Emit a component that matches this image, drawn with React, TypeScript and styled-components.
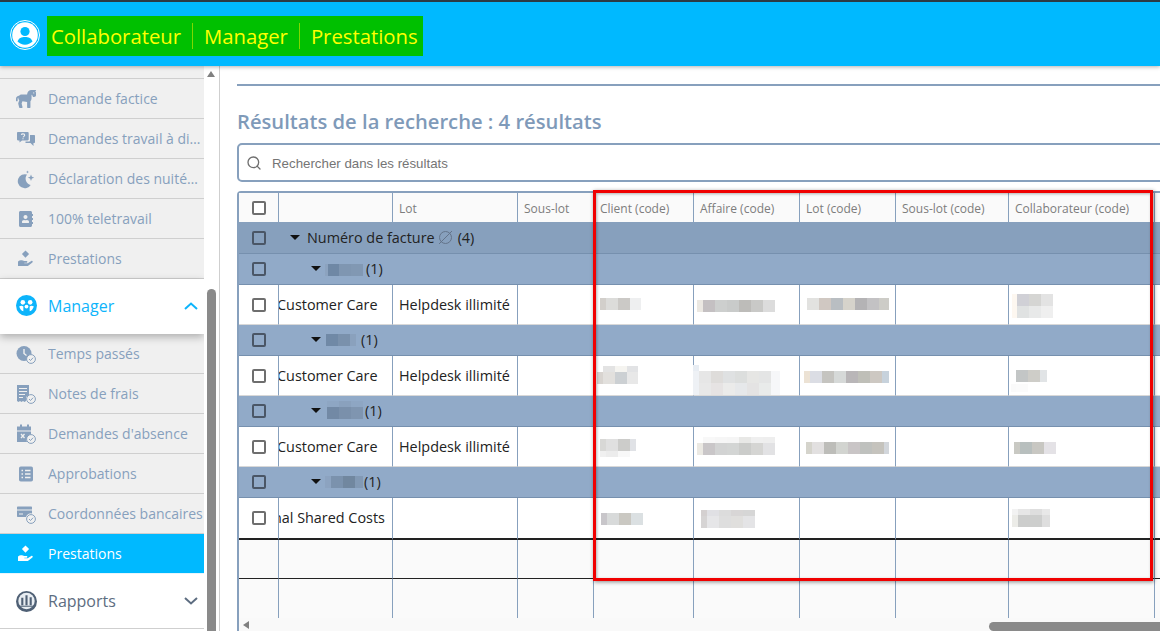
import React from "react";
import styled, { createGlobalStyle } from "styled-components";
import { FaHorse, FaAddressBook } from "react-icons/fa";
import { Search as SearchIcon } from "lucide-react";

const Global = createGlobalStyle`
  html, body { margin: 0; padding: 0; background: #fff; overflow: hidden; }
  body { font-family: "Open Sans", "Liberation Sans", sans-serif; }
  * { box-sizing: border-box; }
`;

const Page = styled.div`
  position: relative;
  width: 1160px;
  height: 631px;
  overflow: hidden;
  display: flex;
  flex-direction: column;
`;

const TopBar = styled.header`
  position: relative;
  z-index: 2;
  flex: none;
  height: 66px;
  background: #00b9ff;
  border-top: 2px solid #2b3a45;
  box-shadow: 0 1px 4px rgba(0, 0, 0, 0.3);
  display: flex;
  align-items: flex-start;
  padding: 14px 0 0 10px;
`;

const Avatar = styled.svg`
  width: 30px;
  height: 30px;
  margin: 4px 7px 0 0;
  flex: none;
`;

const Crumbs = styled.nav`
  height: 40px;
  width: 376px;
  background: #00c000;
  display: flex;
  align-items: center;
  padding-left: 4px;
  color: #ffff00;
  font-size: 20.3px;
  line-height: 27px;
`;

const Crumb = styled.span<{ $sep?: boolean }>`
  display: flex;
  align-items: center;
  height: 26px;
  padding: 0 11px;
  ${(p) => (p.$sep ? "border-left: 1px solid #7fd800;" : "padding-left: 0;")}
`;

const Body = styled.div`
  flex: 1;
  min-height: 0;
  display: flex;
`;

const Side = styled.aside`
  flex: none;
  width: 204px;
  background: #f0f0f0;
  display: flex;
  flex-direction: column;
  overflow: hidden;
`;

const SideRow = styled.div<{ $active?: boolean; $clip?: boolean }>`
  flex: none;
  height: ${(p) => (p.$clip ? "13px" : "40px")};
  display: flex;
  align-items: center;
  padding-left: 16px;
  gap: 12px;
  font-size: 14px;
  white-space: nowrap;
  color: ${(p) => (p.$active ? "#fff" : "#87a0bd")};
  background: ${(p) => (p.$active ? "#00b9ff" : "#f0f0f0")};
  border-bottom: 1px solid ${(p) => (p.$active ? "#e6f5fc" : "#cfcfcf")};
`;

const RowLabel = styled.span`
  min-width: 0;
  flex: 1;
  overflow: hidden;
  text-overflow: ellipsis;
`;

const IconBox = styled.span`
  flex: none;
  width: 20px;
  height: 20px;
  display: flex;
  align-items: center;
  justify-content: center;
  svg { display: block; flex: none; }
`;

const SideHead = styled.div<{ $open?: boolean }>`
  position: relative;
  flex: none;
  height: 55px;
  display: flex;
  align-items: center;
  padding: 0 6px ${(p) => (p.$open ? 2 : 0)}px 16px;
  gap: 12px;
  font-size: 16px;
  background: #fff;
  color: ${(p) => (p.$open ? "#0db4fb" : "#5d6d81")};
  border-bottom: ${(p) => (p.$open ? "none" : "1px solid #cfcfcf")};
  box-shadow: ${(p) => (p.$open ? "0 3px 8px rgba(0,0,0,.28)" : "none")};
`;

const HeadLabel = styled.span`
  flex: 1;
`;

const Tail = styled.div`
  flex: 1;
  background: #fff;
`;

const SideScroll = styled.div`
  flex: none;
  width: 16px;
  background: #fff;
  border-right: 1px solid #cfcfcf;
  display: flex;
  flex-direction: column;
  align-items: flex-start;
  padding: 5px 0 0 3px;
`;

const UpArrow = styled.div`
  width: 0;
  height: 0;
  border-left: 4.5px solid transparent;
  border-right: 4.5px solid transparent;
  border-bottom: 6px solid #808080;
`;

const SideThumb = styled.div`
  width: 9px;
  flex: 1;
  margin-top: 212px;
  background: #8a8a8a;
  border-radius: 5px 5px 0 0;
`;

const Main = styled.main`
  flex: 1;
  min-width: 0;
  overflow: hidden;
  padding: 18px 0 0 17px;
  background: #fff;
`;

const Rule = styled.div`
  height: 2px;
  background: #87a0bd;
`;

const Title = styled.h2`
  margin: 20px 0 0;
  font-size: 20.2px;
  line-height: 30px;
  font-weight: 600;
  color: #7f9ab9;
  white-space: nowrap;
`;

const Search = styled.div`
  margin-top: 7px;
  width: 1000px;
  height: 39px;
  border: 2px solid #87a0bd;
  border-radius: 5px;
  display: flex;
  align-items: center;
  gap: 10px;
  padding-left: 7px;
  font-family: "Liberation Sans", Arial, sans-serif;
  font-size: 13.3px;
  color: #757575;
  svg { color: #6f6f6f; flex: none; }
`;

const SearchText = styled.span`
  padding-top: 2px;
`;

const TableBox = styled.div`
  margin-top: 9px;
  width: 1000px;
  height: 440px;
  border-left: 2px solid #87a0bd;
  border-top: 2px solid #87a0bd;
  border-top-left-radius: 4px;
  background: #fafafa;
  display: flex;
  flex-direction: column;
`;

const GridWrap = styled.div`
  flex: none;
  height: 425px;
  overflow: hidden;
`;

const Grid = styled.table`
  border-collapse: separate;
  border-spacing: 0;
  table-layout: fixed;
  width: 916px;
`;

const Th = styled.th<{ $check?: boolean }>`
  height: 29px;
  padding: ${(p) => (p.$check ? 0 : 2)}px 0 0 ${(p) => (p.$check ? 13 : 6)}px;
  background: #fafafa;
  border-right: 1px solid #87a0bd;
  font-size: 12px;
  font-weight: 400;
  text-align: left;
  color: #7d7d7d;
  white-space: nowrap;
  overflow: hidden;
`;

const Td = styled.td<{ $empty?: boolean; $thick?: boolean; $thin?: boolean; $h?: number }>`
  height: ${(p) => p.$h ?? 40}px;
  padding: 0;
  vertical-align: top;
  background: ${(p) => (p.$empty ? "#fafafa" : "#fff")};
  border-right: 1px solid #87a0bd;
  border-bottom: ${(p) => (p.$thick ? "2px solid #222" : p.$thin ? "1px solid #222" : p.$empty ? "none" : "1px solid #d8d8d8")};
  font-size: 14.4px;
  color: #222;
`;

const CellText = styled.div<{ $shift?: number }>`
  height: 39px;
  line-height: 39px;
  white-space: nowrap;
  overflow: hidden;
  padding-left: 6px;
  span { display: inline-block; margin-left: ${(p) => p.$shift ?? 0}px; }
`;

const CheckCell = styled.div`
  height: 100%;
  display: flex;
  align-items: center;
  padding-left: 13px;
`;

const Box = styled.span<{ $dark?: boolean }>`
  display: block;
  width: 14px;
  height: 14px;
  border-radius: 2px;
  background: ${(p) => (p.$dark ? "transparent" : "#fff")};
  border: 2px solid ${(p) => (p.$dark ? "#4a5666" : "#6e6e6e")};
`;

const GroupCell = styled.td<{ $level: number }>`
  height: ${(p) => (p.$level === 0 ? 32 : 31)}px;
  padding: 0;
  background: ${(p) => (p.$level === 0 ? "#87a0bd" : "#91aac8")};
  border-bottom: 1px solid #7690ae;
  font-size: 14.4px;
  color: #222;
  white-space: nowrap;
`;

const GroupInner = styled.div<{ $level: number }>`
  height: 100%;
  display: flex;
  align-items: center;
  padding-left: ${(p) => (p.$level === 0 ? 11 : 32)}px;
  padding-bottom: ${(p) => (p.$level === 0 ? 0 : 2)}px;
`;

const Caret = styled.span`
  flex: none;
  width: 0;
  height: 0;
  margin-right: 4px;
  border-left: 5px solid transparent;
  border-right: 5px solid transparent;
  border-top: 5px solid #111;
`;

const GroupName = styled.span`
  margin-left: 3px;
`;

const NullMark = styled.svg`
  flex: none;
  width: 15px;
  height: 15px;
  margin: 0 5px 0 3px;
`;

const Count = styled.span<{ $gap: number }>`
  margin-left: ${(p) => p.$gap}px;
`;

const Pixels = styled.svg<{ $x: number; $y: number }>`
  display: block;
  flex: none;
  overflow: visible;
  margin-left: ${(p) => p.$x}px;
  margin-top: ${(p) => p.$y}px;
`;

const HScroll = styled.div`
  flex: 1;
  display: flex;
  align-items: center;
  background: #f9f9f9;
  padding-left: 4px;
`;

const LeftArrow = styled.div`
  flex: none;
  width: 0;
  height: 0;
  border-top: 4.5px solid transparent;
  border-bottom: 4.5px solid transparent;
  border-right: 6px solid #808080;
`;

const HThumb = styled.div`
  flex: none;
  margin-left: 740px;
  width: 220px;
  height: 9px;
  margin-top: 4px;
  background: #8a8a8a;
  border-radius: 5px 0 0 5px;
`;

const RedFrame = styled.div`
  position: absolute;
  z-index: 3;
  left: 593px;
  top: 190px;
  width: 560px;
  height: 391px;
  border: 3px solid #f00000;
  box-shadow: 1px 1px 4px rgba(0, 0, 0, 0.45), inset 1px 1px 3px rgba(0, 0, 0, 0.3);
  pointer-events: none;
`;

type M = { x: number; y: number; w: number[]; h: number[]; c: string[][] };

const Mosaic = ({ x, y, w, h, c }: M) => {
  const tw = w.reduce((a, b) => a + b, 0);
  const th = h.reduce((a, b) => a + b, 0);
  let yy = 0;
  return (
    <Pixels $x={x} $y={y} width={tw} height={th} shapeRendering="crispEdges">
      {h.map((rh, r) => {
        let xx = 0;
        const top = yy;
        yy += rh;
        return w.map((cw, i) => {
          const el = <rect key={r + "-" + i} x={xx} y={top} width={cw} height={rh} fill={c[r][i]} />;
          xx += cw;
          return el;
        });
      })}
    </Pixels>
  );
};

const Chevron = ({ up }: { up?: boolean }) => (
  <svg width="14" height="8" viewBox="0 0 14 8" fill="none" stroke="currentColor" strokeWidth="2">
    <path d={up ? "M1 7l6-5.500L13 7" : "M1 1l6 5.500L13 1"} />
  </svg>
);

const Badge = () => (
  <g>
    <circle cx="15" cy="15" r="4.400" fill="#f0f0f0" stroke="#87a0bd" strokeWidth="1" />
    <path d="M13 15l1.500 1.500 2.600-2.800" fill="none" stroke="#87a0bd" strokeWidth="1" />
  </g>
);

const Ico = ({ children }: { children: React.ReactNode }) => (
  <IconBox>
    <svg width="20" height="20" viewBox="0 0 20 20" fill="#87a0bd">
      {children}
    </svg>
  </IconBox>
);

const HandIcon = ({ color }: { color: string }) => (
  <IconBox>
    <svg width="20" height="20" viewBox="0 0 20 20" fill={color}>
      <path d="M9.500 1.500l3.600 3.600-3.600 3.600-3.600-3.600z" />
      <path d="M2 12.500c1.400-1.300 2.700-1.600 4-1.200l2.300.7h2.400c.9 0 .9 1.700 0 1.700H8.300v.5h3.400l3.600-2.200c1.100-.6 2 .6 1.100 1.400l-3.900 3c-.5.4-1 .5-1.600.5H2z" />
    </svg>
  </IconBox>
);

const icons = {
  horse: <IconBox><FaHorse size={20} color="#87a0bd" /></IconBox>,
  talk: (
    <Ico>
      <path d="M2 3h9.500c.8 0 1.200.5 1.200 1.200v6c0 .7-.4 1.200-1.200 1.200H6l-2.500 2v-2H2c-.7 0-1-.5-1-1.200v-6C1 3.500 1.300 3 2 3z" />
      <path d="M14 6h4c.7 0 1 .4 1 1v6c0 .7-.3 1-1 1h-.5v3l-3-3H9.500v-1.500h3.700c.5 0 .8-.4.8-.9z" />
      <path d="M5.300 5.800c.4-1.300 3.400-1.300 3.400.4 0 1.200-1.500 1.100-1.600 2.200M7 9.200v1" fill="none" stroke="#f0f0f0" strokeWidth="1.100" />
    </Ico>
  ),
  moon: (
    <Ico>
      <path d="M11 5.500a7 7 0 1 0 3.700 10.400A6.500 6.500 0 0 1 11 5.500z" />
      <path d="M15 5.500l.9 2.300 2.300.9-2.300.9-.9 2.300-.9-2.300-2.300-.9 2.300-.9zM11.500 1.500l.4 1.100 1.100.4-1.100.4-.4 1.100-.4-1.100-1.100-.4 1.100-.4z" />
    </Ico>
  ),
  book: <IconBox><FaAddressBook size={16} color="#87a0bd" /></IconBox>,
  clock: (
    <Ico>
      <circle cx="8" cy="9.500" r="7.500" />
      <path d="M8 5v4.500l2.500 2" fill="none" stroke="#f0f0f0" strokeWidth="1.400" />
      <Badge />
    </Ico>
  ),
  receipt: (
    <Ico>
      <path d="M1 1h12v10l-3 2v4l-1.500 1-1.500-1-1.500 1L4 17l-1.500 1L1 17z" />
      <path d="M3 4.500h8M3 7.500h8M3 10.500h6M3 13.500h4" stroke="#f0f0f0" strokeWidth="1.200" />
      <Badge />
    </Ico>
  ),
  cal: (
    <Ico>
      <path d="M4 0.500h2v2h5v-2h2v2h2v4H1v-4h3zM1 7.500h14V11a5 5 0 0 0-4 7H1z" />
      <path d="M5 10l3.500 4M8.500 10L5 14" stroke="#f0f0f0" strokeWidth="1.300" />
      <Badge />
    </Ico>
  ),
  list: (
    <Ico>
      <rect x="3" y="2.500" width="14" height="15" rx="1.800" />
      <path d="M5.500 6.500h1.500M5.500 10h1.500M5.500 13.500h1.500M9 6.500h5.500M9 10h5.500M9 13.500h5.500" stroke="#f0f0f0" strokeWidth="1.500" />
    </Ico>
  ),
  card: (
    <Ico>
      <path d="M2 2.500h13c.6 0 1 .4 1 1v6a5 5 0 0 0-6 3.500H2c-.6 0-1-.4-1-1v-8.500c0-.6.4-1 1-1z" />
      <path d="M1 6h15M3 10h4" stroke="#f0f0f0" strokeWidth="1.200" />
      <Badge />
    </Ico>
  ),
};

const ManagerIcon = () => (
  <IconBox>
    <svg width="21" height="21" viewBox="0 0 20 20">
      <circle cx="10" cy="10" r="10" fill="#0db4fb" />
      <circle cx="6.500" cy="7" r="2.200" fill="#fff" />
      <circle cx="13.500" cy="7" r="2.200" fill="#fff" />
      <circle cx="10" cy="11" r="1.800" fill="#fff" />
      <path d="M3 11c1.500-1 3-1 4 0v4.500C5 15 4 13.500 3 11zM17 11c-1.500-1-3-1-4 0v4.500c2-.5 3-2 4-4.500z" fill="#fff" />
    </svg>
  </IconBox>
);

const ReportIcon = () => (
  <IconBox>
    <svg width="21" height="21" viewBox="0 0 20 20">
      <circle cx="10" cy="10" r="10" fill="#4f6075" />
      <circle cx="10" cy="9.500" r="7.800" fill="#e8edf2" />
      <path d="M5 6.500v7h2V6.500zM9 4v9.500h2V4zM13 6v7.500h2V6z" fill="#4f6075" />
      <path d="M3 14.500h14" stroke="#4f6075" strokeWidth="1" />
    </svg>
  </IconBox>
);

const colWidths = [40, 114, 125, 76, 100, 106, 96, 113, 146, 100];
const headers = ["", "", "Lot", "Sous-lot", "Client (code)", "Affaire (code)", "Lot (code)", "Sous-lot (code)", "Collaborateur (code)", ""];

type Row = {
  label: M;
  labelGap: number;
  name: string;
  shift: number;
  lot: string;
  client: M;
  affaire: M | null;
  lotCode: M | null;
  collab: M;
};

const rows: Row[] = [
  {
    label: { x: 0, y: 4, w: [3, 11, 12, 12], h: [12], c: [["#8ca3bf", "#6f88a5", "#7f96b1", "#8198b3"]] },
    labelGap: 3,
    name: "Customer Care",
    shift: -8,
    lot: "Helpdesk illimité",
    client: { x: 6, y: 13, w: [6, 12, 12, 11], h: [12], c: [["#d2cfcb", "#dcdcda", "#cbc9c6", "#eeeff0"]] },
    affaire: { x: 3, y: 15, w: [6, 12, 12, 12, 12, 12, 12], h: [12], c: [["#ebe8e2", "#c4c0c2", "#cdcfce", "#c9cbca", "#bdbcb9", "#c9c9c7", "#dcdcdc"]] },
    lotCode: { x: 7, y: 13, w: [12, 12, 12, 12, 12, 12, 10], h: [12], c: [["#e2e2e0", "#d0c8c2", "#b9bec2", "#d6d3cb", "#b4b3b5", "#c3c2c4", "#cdccc7"]] },
    collab: { x: 3, y: 9, w: [5, 12, 12, 12], h: [12, 12], c: [["#fdf7f0", "#d0d0d6", "#d5d5d3", "#e3e3e3"], ["#fdf7f0", "#e0e2e2", "#e8e9e9", "#efefef"]] },
  },
  {
    label: { x: 1, y: 2, w: [12, 12, 6], h: [12], c: [["#7089a6", "#7a91ac", "#8aa1bd"]] },
    labelGap: 5,
    name: "Customer Care",
    shift: -8,
    lot: "Helpdesk illimité",
    client: { x: 3, y: 10, w: [6, 12, 12, 11], h: [6, 12], c: [["transparent", "#e3e3e3", "#f5f4f0", "#e2e3e5"], ["#d8d4d0", "#e2e0dd", "#ccd0d3", "#e8e8e8"]] },
    affaire: { x: -1, y: 9, w: [6, 12, 12, 12, 12, 12, 12, 9], h: [6, 12, 12], c: [
      ["#e8edf3", "transparent", "transparent", "transparent", "transparent", "transparent", "transparent", "transparent"],
      ["#eef1f5", "#e6e6e6", "#dedcda", "#dfe1e2", "#dcdedd", "#e6e6e4", "#e4e5e5", "#f6f7f9"],
      ["#eef1f5", "#e8e8e8", "#e6e3e3", "#ebebea", "#e6e8ea", "#e4e3e3", "#e9ebea", "#f6f7f9"],
    ] },
    lotCode: { x: 4, y: 15, w: [6, 12, 12, 12, 12, 12, 12, 7], h: [12], c: [["#ece2d4", "#dbdde4", "#c5c4c0", "#d6d9d8", "#b9b6b8", "#bfbfb8", "#cdc8c2", "#c7d2dc"]] },
    collab: { x: 2, y: 14, w: [5, 12, 12, 7], h: [12, 2, 8], c: [["transparent", "#c3c6c6", "#cecdc8", "#e1e4e6"], ["transparent", "transparent", "transparent", "transparent"], ["#fafafa", "#fbfbfb", "transparent", "transparent"]] },
  },
  {
    label: { x: 2, y: 0, w: [12, 12, 12], h: [6, 12], c: [["#8ea6c3", "#8aa1bd", "#8ea6c3"], ["#7289a5", "#7a90ab", "#7f95b0"]] },
    labelGap: 2,
    name: "Customer Care",
    shift: -8,
    lot: "Helpdesk illimité",
    client: { x: 6, y: 12, w: [6, 12, 12, 6], h: [12, 6], c: [["#d8d8d6", "#e0e0e0", "#ccccca", "#e0e2e6"], ["#f0f0f0", "#ececec", "#f8f8f8", "transparent"]] },
    affaire: { x: 3, y: 10, w: [6, 12, 12, 12, 12, 12, 12], h: [6, 12], c: [["transparent", "#f8f8f8", "#f6f6f6", "#f5f5f5", "#e8e8e6", "#efefef", "#eeeeee"], ["#ebe9e3", "#c9c6c8", "#d2d3d3", "#d3d5d4", "#cbccca", "#d5d5d3", "#e2e2e4"]] },
    lotCode: { x: 6, y: 15, w: [6, 12, 12, 12, 12, 12, 12, 5], h: [12], c: [["#d5d4cc", "#e2e0e0", "#bdbdb9", "#d2d4d0", "#c9c5c6", "#bfc1be", "#c5c3bd", "#d2d6db"]] },
    collab: { x: 5, y: 15, w: [6, 12, 12, 12], h: [12], c: [["#c9c9c3", "#b8bfbe", "#c8c7c2", "#e4e2e6"]] },
  },
  {
    label: { x: 0, y: 2, w: [6, 12, 12, 8], h: [12], c: [["#8ca3c0", "#7b92ad", "#71879f", "#8299b4"]] },
    labelGap: 1,
    name: "Internal Shared Costs",
    shift: -44,
    lot: "",
    client: { x: 7, y: 15, w: [6, 12, 12, 12], h: [12], c: [["#c8c6ca", "#d8dada", "#cac8c2", "#dbe0e2"]] },
    affaire: { x: 7, y: 12, w: [6, 12, 12, 12, 12], h: [6, 12], c: [["#d4d0d0", "#e0e0e4", "#dcdcdc", "#d8d6d6", "#d6d6d6"], ["#d6d4d4", "#e6e6e8", "#dedede", "#e0dfdd", "#e4e4e6"]] },
    lotCode: null,
    collab: { x: 3, y: 11, w: [6, 12, 12, 8], h: [6, 12], c: [["#f2f2f2", "#e6e6e6", "#dedede", "#e8e8e8"], ["#ecece8", "#cccdcc", "#cdcecd", "#dedede"]] },
  },
];

const GroupRow = ({ level, children }: { level: number; children: React.ReactNode }) => (
  <tr>
    <GroupCell $level={level}>
      <CheckCell><Box $dark /></CheckCell>
    </GroupCell>
    <GroupCell $level={level} colSpan={9}>
      <GroupInner $level={level}>{children}</GroupInner>
    </GroupCell>
  </tr>
);

const EmptyRow = ({ h, line }: { h: number; line?: boolean }) => (
  <tr>
    {colWidths.map((_, i) => (
      <Td key={i} $empty $thin={line} $h={h} />
    ))}
  </tr>
);

export default function App() {
  return (
    <Page>
      <Global />
      <TopBar>
        <Avatar viewBox="0 0 30 30">
          <circle cx="15" cy="15" r="14.500" fill="none" stroke="#fff" strokeWidth="1" />
          <circle cx="15" cy="15" r="12.800" fill="#fff" />
          <circle cx="15" cy="11.500" r="4.600" fill="#00b9ff" />
          <path d="M7.500 21.500c1-3.500 4-4.600 7.500-4.600s6.500 1.100 7.500 4.600c-2 2-4.600 3.200-7.500 3.200s-5.500-1.200-7.500-3.200z" fill="#00b9ff" />
        </Avatar>
        <Crumbs>
          <Crumb>Collaborateur</Crumb>
          <Crumb $sep>Manager</Crumb>
          <Crumb $sep>Prestations</Crumb>
        </Crumbs>
      </TopBar>
      <Body>
        <Side>
          <SideRow $clip />
          <SideRow>{icons.horse}<RowLabel>Demande factice</RowLabel></SideRow>
          <SideRow>{icons.talk}<RowLabel>Demandes travail à distance</RowLabel></SideRow>
          <SideRow>{icons.moon}<RowLabel>Déclaration des nuitées travaillées</RowLabel></SideRow>
          <SideRow>{icons.book}<RowLabel>100% teletravail</RowLabel></SideRow>
          <SideRow><HandIcon color="#87a0bd" /><RowLabel>Prestations</RowLabel></SideRow>
          <SideHead $open>
            <ManagerIcon />
            <HeadLabel>Manager</HeadLabel>
            <Chevron up />
          </SideHead>
          <SideRow>{icons.clock}<RowLabel>Temps passés</RowLabel></SideRow>
          <SideRow>{icons.receipt}<RowLabel>Notes de frais</RowLabel></SideRow>
          <SideRow>{icons.cal}<RowLabel>Demandes d'absence</RowLabel></SideRow>
          <SideRow>{icons.list}<RowLabel>Approbations</RowLabel></SideRow>
          <SideRow>{icons.card}<RowLabel>Coordonnées bancaires</RowLabel></SideRow>
          <SideRow $active><HandIcon color="#fff" /><RowLabel>Prestations</RowLabel></SideRow>
          <SideHead>
            <ReportIcon />
            <HeadLabel>Rapports</HeadLabel>
            <Chevron />
          </SideHead>
          <Tail />
        </Side>
        <SideScroll>
          <UpArrow />
          <SideThumb />
        </SideScroll>
        <Main>
          <Rule />
          <Title>Résultats de la recherche : 4 résultats</Title>
          <Search>
            <SearchIcon size={16} strokeWidth={2} />
            <SearchText>Rechercher dans les résultats</SearchText>
          </Search>
          <TableBox>
            <GridWrap>
              <Grid>
                <colgroup>
                  {colWidths.map((w, i) => (
                    <col key={i} width={w} />
                  ))}
                </colgroup>
                <tbody>
                  <tr>
                    {headers.map((h, i) => (
                      <Th key={i} $check={i === 0}>
                        {i === 0 ? <Box /> : h}
                      </Th>
                    ))}
                  </tr>
                  <GroupRow level={0}>
                    <Caret />
                    <GroupName>Numéro de facture</GroupName>
                    <NullMark viewBox="0 0 15 15" fill="none" stroke="#64748a" strokeWidth="1">
                      <circle cx="7.500" cy="7.500" r="6" />
                      <path d="M1 14L14 1" />
                    </NullMark>
                    (4)
                  </GroupRow>
                  {rows.map((r, idx) => (
                    <React.Fragment key={idx}>
                      <GroupRow level={1}>
                        <Caret />
                        <Mosaic {...r.label} />
                        <Count $gap={r.labelGap}>(1)</Count>
                      </GroupRow>
                      <tr>
                        <Td $thick={idx === 3} $h={idx === 3 ? 42 : 40}>
                          <CheckCell><Box /></CheckCell>
                        </Td>
                        <Td $thick={idx === 3}><CellText $shift={r.shift}><span>{r.name}</span></CellText></Td>
                        <Td $thick={idx === 3}><CellText>{r.lot}</CellText></Td>
                        <Td $thick={idx === 3} />
                        <Td $thick={idx === 3}><Mosaic {...r.client} /></Td>
                        <Td $thick={idx === 3}>{r.affaire && <Mosaic {...r.affaire} />}</Td>
                        <Td $thick={idx === 3}>{r.lotCode && <Mosaic {...r.lotCode} />}</Td>
                        <Td $thick={idx === 3} />
                        <Td $thick={idx === 3}><Mosaic {...r.collab} /></Td>
                        <Td $thick={idx === 3} />
                      </tr>
                    </React.Fragment>
                  ))}
                  <EmptyRow h={39} line />
                  <EmptyRow h={39} />
                </tbody>
              </Grid>
            </GridWrap>
            <HScroll>
              <LeftArrow />
              <HThumb />
            </HScroll>
          </TableBox>
        </Main>
      </Body>
      <RedFrame />
    </Page>
  );
}
